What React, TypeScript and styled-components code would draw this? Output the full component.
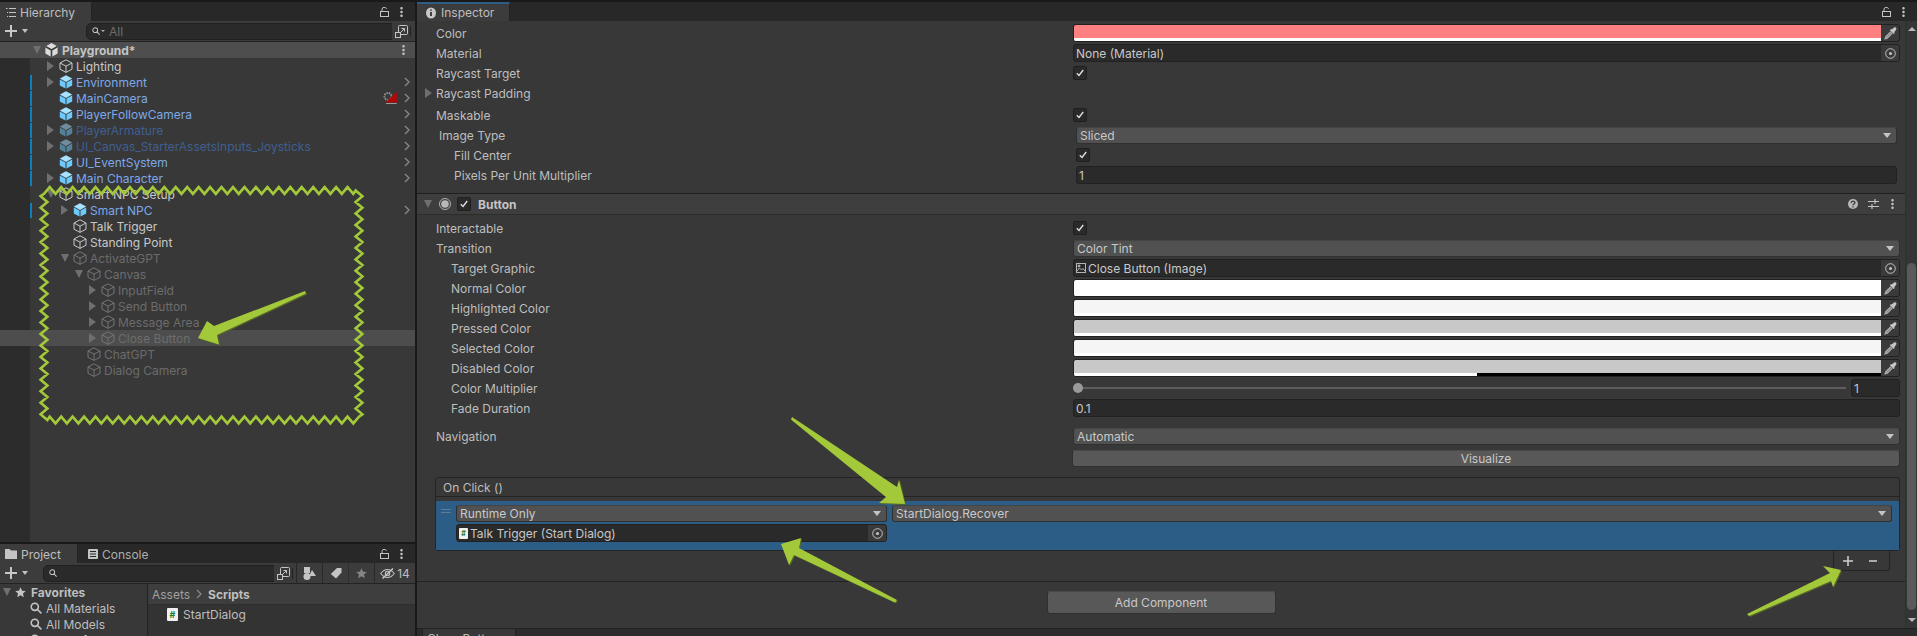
import React from "react";
import styled, { createGlobalStyle } from "styled-components";

const Global = createGlobalStyle`
  html, body { margin: 0; padding: 0; background: #191919; overflow: hidden; }
  * { box-sizing: border-box; }
`;

const Root = styled.div`
  position: relative;
  display: flex;
  width: 1917px;
  height: 636px;
  padding-top: 2px;
  overflow: hidden;
  background: #191919;
  font-family: Inter, "Liberation Sans", sans-serif;
  font-size: 12px;
  color: #bebebe;
  white-space: nowrap;
`;

/* ---------- shared icons ---------- */
const Plus = () => (
  <svg width="12" height="12" viewBox="0 0 12 12"><path d="M6 0v12M0 6h12" stroke="#c8c8c8" strokeWidth="2" /></svg>
);
const SmallCaret = styled.span`
  width: 0; height: 0; margin-left: 5px;
  border-left: 3.5px solid transparent;
  border-right: 3.5px solid transparent;
  border-top: 4px solid #c0c0c0;
`;
const TinyCaret = styled.span`
  width: 0; height: 0; margin-left: -3px;
  border-left: 2px solid transparent;
  border-right: 2px solid transparent;
  border-top: 2px solid #b0b0b0;
`;
const Lock = () => (
  <svg width="9" height="10" viewBox="0 0 9 10" fill="none" stroke="#c4c4c4"><rect x="0.5" y="4.5" width="8" height="5" /><path d="M2 4V2.5a2.3 2.3 0 0 1 4.5-.6" /></svg>
);
const Kebab = () => (
  <svg width="3" height="10" viewBox="0 0 3 10" fill="#c4c4c4"><rect width="2.4" height="2.4" x="0.3" rx="1" /><rect width="2.4" height="2.4" x="0.3" y="3.8" rx="1" /><rect width="2.4" height="2.4" x="0.3" y="7.6" rx="1" /></svg>
);
const SearchIcon = ({ size = 8 }: { size?: number }) => (
  <svg width={size} height={size} viewBox="0 0 10 10" fill="none" stroke="#c4c4c4" strokeWidth="1.3"><circle cx="4" cy="4" r="3" /><path d="M6.2 6.2 9.5 9.5" /></svg>
);
const ExpandIcon = () => (
  <svg width="13" height="13" viewBox="0 0 13 13" fill="none" stroke="#c4c4c4"><rect x="3.5" y="0.5" width="9" height="9" rx="1" /><rect x="0.5" y="7.5" width="5" height="5" fill="#3c3c3c" /><path d="M5 8 9.5 3.5M6.5 3.5h3v3" /></svg>
);
const Chevron = () => (
  <svg width="6" height="10" viewBox="0 0 6 10" fill="none" stroke="#8c8c8c" strokeWidth="1.2"><path d="M1 1l4 4-4 4" /></svg>
);
const Cube = ({ filled, dim }: { filled?: boolean; dim?: boolean }) =>
  filled ? (
    <svg width="14" height="14" viewBox="0 0 14 14" opacity={dim ? 0.5 : 1}>
      <path d="M7 .3 13.2 3.6 7 6.9.8 3.6z" fill="#a6e2ff" />
      <path d="M.8 4.6 6.5 7.6v6L.8 10.6z" fill="#6dcbfb" />
      <path d="M13.2 4.6 7.5 7.6v6l5.7-3z" fill="#6dcbfb" />
    </svg>
  ) : (
    <svg width="14" height="14" viewBox="0 0 14 14" fill="none" stroke={dim ? "#757575" : "#c8c8c8"} strokeWidth="1">
      <path d="M7 .8 13 4v6.2L7 13.4 1 10.2V4z" />
      <path d="M1 4l6 3.1L13 4M7 7.1v6.3" />
    </svg>
  );
const UnityLogo = () => (
  <svg width="13" height="14" viewBox="0 0 13 14">
    <path d="M6.5 0 12.6 3.5v7L6.5 14 .4 10.5v-7z" fill="#dcdcdc" />
    <path d="M6.5 7V14M6.5 7 .4 3.5M6.5 7l6.1-3.5" stroke="#3e3e3e" strokeWidth="1.6" />
  </svg>
);
const CameraBadge = () => (
  <svg width="15" height="14" viewBox="0 0 15 14">
    <circle cx="5" cy="5.500" r="3.500" fill="none" stroke="#8a8a8a" strokeWidth="2" strokeDasharray="1.6 .8" />
    <path d="M13.800 .5V11.500H2.500z" fill="#b00808" />
    <path d="M3 12.500h10.800" stroke="#9a9a9a" strokeWidth="1" />
  </svg>
);
const ListIcon = () => (
  <svg width="10" height="9" viewBox="0 0 10 9" fill="none" stroke="#c4c4c4"><path d="M3 .5h7M3 4.5h7M3 8.5h7M0 .5h1.5M1 4.5h1M1 8.5h1" /></svg>
);
const FolderIcon = () => (
  <svg width="12" height="10" viewBox="0 0 12 10" fill="#c4c4c4"><path d="M0 0h4.5l1.5 1.5h6V10H0z" /></svg>
);
const ConsoleIcon = () => (
  <svg width="10" height="10" viewBox="0 0 10 10"><rect width="10" height="10" rx="1" fill="#c4c4c4" /><path d="M2 2.500h6M2 5h6M2 7.500h6" stroke="#282828" /></svg>
);
const InfoIcon = () => (
  <svg width="10" height="12" viewBox="0 0 10 12"><ellipse cx="5" cy="6" rx="5" ry="5.6" fill="#c8c8c8" /><path d="M5 5v4M5 2.4v1.4" stroke="#303030" strokeWidth="1.8" /></svg>
);
const StarIcon = ({ fill = "#c4c4c4", size = 11 }: { fill?: string; size?: number }) => (
  <svg width={size} height={size} viewBox="0 0 12 12" fill={fill}><path d="M6 .3 7.7 4l4 .4-3 2.7.9 4L6 9l-3.6 2.1.9-4-3-2.7 4-.4z" /></svg>
);
const ShapesIcon = () => (
  <svg width="13" height="13" viewBox="0 0 13 13" fill="#c4c4c4"><rect x="1" width="6" height="6" /><circle cx="4" cy="9.5" r="3.5" /><path d="M9 3l4 6H6z" /></svg>
);
const TagIcon = () => (
  <svg width="12" height="12" viewBox="0 0 12 12" fill="#c4c4c4"><path d="M7 1h4.5v4.5L6 11.5 0.8 7z" /></svg>
);
const EyeOffIcon = () => (
  <svg width="15" height="11" viewBox="0 0 15 11" fill="none" stroke="#c4c4c4" strokeWidth="1.1"><path d="M.8 5.5C3 2.5 5 1.5 7.5 1.5s4.5 1 6.7 4c-2.2 3-4.2 4-6.7 4S3 8.5.8 5.5z" /><circle cx="7.5" cy="5.5" r="2.2" /><path d="M13 .5 2.5 10.5" strokeWidth="1.5" /></svg>
);
const Dropper = () => (
  <svg width="13" height="13" viewBox="0 0 13 13" fill="none">
    <path d="M7.6 2.600 9.800.8c.7-.6 1.500-.6 2.100 0 .7.600.7 1.400.1 2.100L10.200 5.200l.6.700-1.100 1.100L5.900 3.200 7 2.100z" fill="#c6c6c6" />
    <path d="M7 4.800 2 9.800 1.400 11.600 3.200 11 8.200 6" stroke="#a8a8a8" strokeWidth="1.600" />
  </svg>
);
const Target = () => (
  <svg width="11" height="11" viewBox="0 0 11 11" fill="none" stroke="#c4c4c4"><circle cx="5.5" cy="5.5" r="4.8" /><circle cx="5.5" cy="5.5" r="1.5" fill="#c4c4c4" stroke="none" /></svg>
);
const Check = () => (
  <svg width="8" height="8" viewBox="0 0 8 8" fill="none" stroke="#e4e4e4" strokeWidth="1.3"><path d="M.8 4.3 3 6.5 7.2 1" /></svg>
);
const ComponentGlyph = () => (
  <svg width="12" height="12" viewBox="0 0 12 12"><circle cx="6" cy="6" r="5.5" fill="none" stroke="#b0b0b0" /><circle cx="6" cy="6" r="3.8" fill="#b8b8b8" /></svg>
);
const HelpIcon = () => (
  <svg width="10" height="10" viewBox="0 0 10 10"><circle cx="5" cy="5" r="5" fill="#b8b8b8" /><path d="M3.2 3.9c0-2.300 3.700-2.300 3.700-.2 0 1.300-1.900 1.200-1.900 2.500M5 7.200v1.300" fill="none" stroke="#3a3a3a" strokeWidth="1.3" /></svg>
);
const SlidersIcon = () => (
  <svg width="11" height="10" viewBox="0 0 11 10" fill="none" stroke="#c4c4c4" strokeWidth="1.2"><path d="M0 2.500h11M7 0v5M0 7.500h11M4 5v5" /></svg>
);
const ImageGlyph = () => (
  <svg width="10" height="10" viewBox="0 0 10 10" fill="none" stroke="#b4b4b4"><rect x=".5" y=".5" width="9" height="9" /><path d="M1 8l2.500-3 2 2 1.500-1.500L9 8" /><circle cx="3" cy="3" r="1" fill="#b4b4b4" /></svg>
);

const Fold = styled.span<{ $dir?: "right" | "down" | "none" }>`
  display: inline-block;
  flex: none;
  width: 12px;
  height: 10px;
  position: relative;
  &::before {
    content: "";
    position: absolute;
    left: 0;
    top: 0;
    ${(p) =>
      p.$dir === "right"
        ? "border-left: 7px solid #6f6f6f; border-top: 5px solid transparent; border-bottom: 5px solid transparent;"
        : p.$dir === "down"
        ? "top: 1px; border-top: 8px solid #6f6f6f; border-left: 4.5px solid transparent; border-right: 4.5px solid transparent;"
        : ""}
  }
`;

/* ---------- panel chrome ---------- */
const TabBar = styled.div`
  display: flex;
  align-items: stretch;
  flex: none;
  height: 19px;
  background: #282828;
`;
const Tab = styled.div<{ $w: number; $pad?: number; $active?: boolean; $accent?: boolean }>`
  display: flex;
  align-items: center;
  gap: ${(p) => (p.$accent ? 5 : 4)}px;
  width: ${(p) => p.$w}px;
  padding-left: ${(p) => p.$pad ?? 6}px;
  color: ${(p) => (p.$active ? "#bebebe" : "#aeaeae")};
  background: ${(p) => (p.$active ? "#3c3c3c" : "transparent")};
  border-top: ${(p) => (p.$accent ? "2px solid #2c5d87" : "1px solid transparent")};
  border-right: ${(p) => (p.$active ? "1px solid #232323" : "none")};
`;
const TabTools = styled.div`
  display: flex;
  align-items: center;
  gap: 11px;
  margin-left: auto;
  padding-right: 12px;
`;
const Toolbar = styled.div`
  display: flex;
  align-items: center;
  flex: none;
  height: 21px;
  padding-left: 5px;
  background: #3c3c3c;
  border-bottom: 1px solid #232323;
`;
const SearchField = styled.div<{ $left: number; $w: number }>`
  display: flex;
  align-items: center;
  gap: 4px;
  width: ${(p) => p.$w}px;
  height: 17px;
  margin-left: ${(p) => p.$left}px;
  padding-left: 5px;
  background: #2a2a2a;
  border: 1px solid #202020;
  border-radius: 5px;
  color: #6e6e6e;
`;
const SearchExpand = styled.div`
  display: flex;
  align-items: center;
  justify-content: center;
  width: 18px;
  height: 17px;
  margin-left: auto;
  background: #3a3a3a;
`;

/* ---------- layout ---------- */
const LeftColumn = styled.div`
  display: flex;
  flex-direction: column;
  flex: none;
  width: 415px;
  height: 634px;
`;
const Hierarchy = styled.section`
  display: flex;
  flex-direction: column;
  flex: none;
  height: 540px;
`;
const SceneHeader = styled.div`
  display: flex;
  align-items: center;
  flex: none;
  height: 16px;
  padding: 0 10px 0 33px;
  background: #4e4e4e;
  font-weight: 700;
  color: #c4c4c4;
`;
const SceneName = styled.span`
  margin-left: 1px;
  padding-left: 3px;
`;
const Spacer = styled.span`
  margin-left: auto;
`;
const Tree = styled.div`
  flex: 1;
  background: linear-gradient(to right, #2c2c2c 30px, #383838 30px);
`;
const TreeRow = styled.div<{ $selected?: boolean }>`
  display: flex;
  align-items: center;
  height: 16px;
  padding: 0 5px 0 30px;
  background: ${(p) => (p.$selected ? "#4d4d4d" : "transparent")};
`;
const OverrideMark = styled.span<{ $on?: boolean }>`
  flex: none;
  width: 2px;
  height: 15px;
  background: ${(p) => (p.$on ? "#0f80be" : "transparent")};
`;
const TreeIndent = styled.span<{ $depth: number }>`
  flex: none;
  width: ${(p) => 15 + p.$depth * 14}px;
`;
const toneColor = { normal: "#c8c8c8", prefab: "#7ca8e8", prefabDim: "#3f5f92", inactive: "#6c6c6c" };
const TreeLabel = styled.span<{ $tone: keyof typeof toneColor }>`
  margin-left: 3px;
  color: ${(p) => toneColor[p.$tone]};
`;
const RowEnd = styled.span`
  display: flex;
  align-items: center;
  gap: 6px;
  margin-left: auto;
`;

const Project = styled.section`
  display: flex;
  flex-direction: column;
  flex: 1;
  min-height: 0;
  margin-top: 2px;
  overflow: hidden;
`;
const ToolGroup = styled.div`
  display: flex;
  align-items: stretch;
  height: 20px;
  margin-left: 3px;
`;
const ToolButton = styled.div<{ $w: number; $dim?: boolean }>`
  display: flex;
  align-items: center;
  justify-content: center;
  gap: 2px;
  width: ${(p) => p.$w}px;
  border-left: 1px solid #282828;
  opacity: ${(p) => (p.$dim ? 0.55 : 1)};
`;
const ProjectBody = styled.div`
  display: flex;
  flex: 1;
  min-height: 0;
`;
const Favorites = styled.div`
  flex: none;
  width: 148px;
  background: #383838;
  border-right: 1px solid #232323;
`;
const FavoriteHead = styled.div`
  display: flex;
  align-items: center;
  height: 16px;
  padding-left: 3px;
  font-weight: 700;
  gap: 0;
`;
const FavoriteTitle = styled.span`
  margin-left: 5px;
`;
const FavoriteItem = styled.div`
  display: flex;
  align-items: center;
  gap: 4px;
  height: 16px;
  padding-left: 30px;
`;
const Browser = styled.div`
  flex: 1;
  background: #333333;
`;
const Breadcrumb = styled.div`
  display: flex;
  align-items: center;
  gap: 6px;
  height: 21px;
  padding-left: 4px;
  background: #3e3e3e;
  border-bottom: 1px solid #2e2e2e;
  color: #a0a0a0;
`;
const CrumbStrong = styled.b`
  color: #bebebe;
`;
const AssetRow = styled.div`
  display: flex;
  align-items: center;
  gap: 5px;
  height: 18px;
  padding-left: 19px;
`;
const ScriptGlyph = styled.span<{ $size: number }>`
  display: inline-flex;
  align-items: center;
  justify-content: center;
  flex: none;
  width: ${(p) => p.$size}px;
  height: ${(p) => p.$size + 2}px;
  background: #f0f0f0;
  border-radius: 1px;
  color: #1f7a33;
  font-size: ${(p) => p.$size - 2}px;
  font-weight: 700;
  line-height: 1;
`;

const VDivider = styled.div`
  flex: none;
  width: 2px;
`;

/* ---------- inspector ---------- */
const Inspector = styled.section`
  display: flex;
  flex-direction: column;
  flex: 1;
  min-width: 0;
  height: 634px;
`;
const InspectorBody = styled.div`
  display: flex;
  flex: none;
  height: 607px;
  background: #383838;
`;
const Content = styled.div`
  flex: 1;
  min-width: 0;
  padding-top: 2px;
`;
const Scrollbar = styled.div`
  display: flex;
  flex-direction: column;
  align-items: center;
  flex: none;
  width: 12px;
  background: #353535;
  border-left: 1px solid #303030;
`;
const ScrollUp = styled.span`
  margin-top: 6px;
  border-left: 4px solid transparent;
  border-right: 4px solid transparent;
  border-bottom: 4px solid #b8b8b8;
`;
const ScrollThumb = styled.span`
  width: 9px;
  height: 347px;
  margin-top: 232px;
  background: #5a5a5a;
  border-radius: 5px;
`;
const ScrollDown = styled.span`
  margin-top: 8px;
  border-left: 4px solid transparent;
  border-right: 4px solid transparent;
  border-top: 4px solid #b8b8b8;
`;
const PropRow = styled.div<{ $top?: number }>`
  display: grid;
  grid-template-columns: 656px 1fr;
  align-items: center;
  height: 20px;
  margin-top: ${(p) => p.$top ?? 0}px;
  padding-right: 5px;
`;
const PropLabel = styled.div<{ $indent?: number }>`
  display: flex;
  align-items: center;
  padding-left: ${(p) => 19 + (p.$indent ?? 0)}px;
`;
const LabelFold = styled(Fold)`
  width: 11px;
  margin-left: -11px;
`;
const Value = styled.div<{ $inset?: number }>`
  display: flex;
  align-items: center;
  min-width: 0;
  padding: 0 ${(p) => p.$inset ?? 0}px;
`;
const Box = styled.span`
  display: flex;
  align-items: center;
  justify-content: center;
  flex: none;
  width: 14px;
  height: 14px;
  background: #2a2a2a;
  border: 1px solid #1f1f1f;
  border-radius: 2px;
`;
const Dropdown = styled.div<{ $w?: number }>`
  display: flex;
  align-items: center;
  justify-content: space-between;
  width: ${(p) => (p.$w ? `${p.$w}px` : "100%")};
  flex: ${(p) => (p.$w ? "none" : "1")};
  height: 17px;
  padding: 0 5px 0 3px;
  background: #515151;
  border: 1px solid #303030;
  border-top-color: #444;
  border-radius: 3px;
  color: #c8c8c8;
`;
const Field = styled.div<{ $w?: number }>`
  display: flex;
  align-items: center;
  width: ${(p) => (p.$w ? `${p.$w}px` : "100%")};
  flex: ${(p) => (p.$w ? "none" : "1")};
  height: 18px;
  padding-left: 2px;
  gap: 2px;
  overflow: hidden;
  background: #2a2a2a;
  border: 1px solid #212121;
  border-radius: 3px;
  color: #c8c8c8;
`;
const FieldAction = styled.span`
  display: flex;
  align-items: center;
  justify-content: center;
  flex: none;
  width: 18px;
  height: 16px;
  margin-left: auto;
  background: #3a3a3a;
`;
const SwatchField = styled.div`
  display: flex;
  width: 100%;
  height: 18px;
  overflow: hidden;
  background: #1f1f1f;
  border: 1px solid #212121;
  border-radius: 3px;
`;
const Swatch = styled.div<{ $color: string; $alpha: number }>`
  display: flex;
  flex-direction: column;
  flex: 1;
  background: ${(p) => p.$color};
  &::after {
    content: "";
    margin-top: auto;
    height: 3px;
    background: linear-gradient(to right, #fff ${(p) => p.$alpha}%, #000 ${(p) => p.$alpha}%);
  }
`;
const DropperCell = styled.span`
  display: flex;
  align-items: center;
  justify-content: center;
  flex: none;
  width: 18px;
  padding-left: 1px;
  background: #3a3a3a;
`;
const SliderTrack = styled.div`
  position: relative;
  flex: 1;
  height: 2px;
  background: #5e5e5e;
`;
const SliderKnob = styled.span`
  position: absolute;
  left: 0;
  top: -4px;
  width: 10px;
  height: 10px;
  background: #9a9a9a;
  border-radius: 50%;
`;
const SliderBox = styled(Field)`
  margin-left: 5px;
`;
const WideButton = styled.div`
  display: flex;
  align-items: center;
  justify-content: center;
  width: calc(100% + 1px);
  height: 17px;
  margin-left: -1px;
  background: #585858;
  border: 1px solid #303030;
  border-top-color: #4a4a4a;
  border-radius: 3px;
  color: #c8c8c8;
`;
const ComponentHeader = styled.div`
  display: flex;
  align-items: center;
  height: 22px;
  margin-top: 8px;
  margin-bottom: 3px;
  padding: 0 12px 0 7px;
  background: #3e3e3e;
  border-top: 1px solid #1f1f1f;
  border-bottom: 1px solid #2c2c2c;
`;
const HeaderFold = styled(Fold)`
  width: 15px;
`;
const HeaderCheck = styled(Box)`
  margin: 0 7px 0 6px;
`;
const HeaderTitle = styled.b`
  color: #c4c4c4;
`;
const HeaderTools = styled.span`
  display: flex;
  align-items: center;
  gap: 10px;
  margin-left: auto;
`;
const HeaderToolKebab = styled.span`
  display: flex;
  margin-left: 2px;
  margin-right: -1px;
`;
const EventBox = styled.div`
  margin: 9px 5px 0 18px;
`;
const EventFrame = styled.div`
  background: #383838;
  border: 1px solid #242424;
  border-radius: 3px;
`;
const EventHeader = styled.div`
  display: flex;
  align-items: center;
  height: 19px;
  padding-left: 7px;
  border-bottom: 1px solid #242424;
`;
const EventRow = styled.div`
  position: relative;
  margin-top: 4px;
  padding: 4px 7px 8px 20px;
  background: #2c5d87;
`;
const DragHandle = styled.span`
  position: absolute;
  left: 5px;
  top: 8px;
  width: 10px;
  height: 4px;
  border-top: 1px solid #5e7c96;
  border-bottom: 1px solid #5e7c96;
`;
const EventLine = styled.div<{ $top?: number }>`
  display: flex;
  gap: 5px;
  margin-top: ${(p) => p.$top ?? 0}px;
`;
const EventFooter = styled.div`
  display: flex;
  align-items: center;
  gap: 16px;
  width: 57px;
  height: 20px;
  margin: 0 10px 0 auto;
  padding: 0 0 0 9px;
  border: 1px solid #242424;
  border-top: none;
  border-radius: 0 0 3px 3px;
`;
const Separator = styled.div`
  height: 1px;
  margin-top: 10px;
  background: #232323;
`;
const AddButton = styled.div`
  display: flex;
  align-items: center;
  justify-content: center;
  width: 229px;
  height: 23px;
  margin: 9px auto 0;
  background: #585858;
  border: 1px solid #303030;
  border-top-color: #4a4a4a;
  border-radius: 3px;
  color: #c8c8c8;
`;
const BottomStrip = styled.div`
  display: flex;
  flex: 1;
  min-height: 0;
  padding-left: 5px;
  overflow: hidden;
  background: #2c2c2c;
  border-top: 1px solid #232323;
`;
const BottomTab = styled.div`
  width: 94px;
  height: 20px;
  padding: 2px 0 0 4px;
  background: #383838;
  border-left: 1px solid #232323;
  border-right: 1px solid #232323;
`;
const Caret = styled.span`
  flex: none;
  border-left: 4px solid transparent;
  border-right: 4px solid transparent;
  border-top: 5px solid #c4c4c4;
`;

/* ---------- annotation overlay ---------- */
const Overlay = styled.svg`
  position: absolute;
  left: 0;
  top: 0;
  pointer-events: none;
`;
const ArrowShape = styled.polygon`
  fill: #a3c93a;
  filter: drop-shadow(1px 1px 0 #55662a);
`;

function zigzag(corners: [number, number][], period: number, amp: number): string {
  const pts: string[] = [];
  corners.forEach(([ax, ay], i) => {
    const [bx, by] = corners[(i + 1) % corners.length];
    const len = Math.hypot(bx - ax, by - ay);
    const n = Math.round(len / (period / 2));
    const nx = -(by - ay) / len;
    const ny = (bx - ax) / len;
    for (let k = 0; k < n; k++) {
      const t = k / n;
      const s = k % 2 === 0 ? amp : -amp;
      pts.push(`${(ax + (bx - ax) * t + nx * s).toFixed(1)},${(ay + (by - ay) * t + ny * s).toFixed(1)}`);
    }
  });
  return pts.join(" ");
}

const Annotations = () => (
  <Overlay width="1917" height="636" viewBox="0 0 1917 636">
    <polygon
      points={zigzag([[44, 190.5], [359, 190.5], [359, 420], [44, 420]], 11.5, 3.4)}
      fill="none"
      stroke="#a3c93a"
      strokeWidth="2.6"
    />
    <ArrowShape points="305,291 306,293.5 217,335 219,344.5 198,338 207,321 214,326" />
    <ArrowShape points="792,417 897,487 899,480 905,504 879,503 886,497 791,419.5" />
    <ArrowShape points="897,600 895,602.5 794,555 789,565 781,544 801,538 799,548" />
    <ArrowShape points="1747,614 1830,573 1823,566 1841,570 1833,587 1831,581 1749,616" />
  </Overlay>
);

/* ---------- data ---------- */
type TreeItem = {
  label: string;
  depth: number;
  fold?: "right" | "down" | "none";
  kind: "plain" | "prefab" | "prefabDim" | "inactive";
  override?: boolean;
  selected?: boolean;
  badge?: boolean;
};
const treeItems: TreeItem[] = [
  { label: "Lighting", depth: 0, fold: "right", kind: "plain" },
  { label: "Environment", depth: 0, fold: "right", kind: "prefab", override: true },
  { label: "MainCamera", depth: 0, kind: "prefab", override: true, badge: true },
  { label: "PlayerFollowCamera", depth: 0, kind: "prefab", override: true },
  { label: "PlayerArmature", depth: 0, fold: "right", kind: "prefabDim", override: true },
  { label: "UI_Canvas_StarterAssetsInputs_Joysticks", depth: 0, fold: "right", kind: "prefabDim", override: true },
  { label: "UI_EventSystem", depth: 0, kind: "prefab", override: true },
  { label: "Main Character", depth: 0, fold: "right", kind: "prefab", override: true },
  { label: "Smart NPC Setup", depth: 0, fold: "down", kind: "plain" },
  { label: "Smart NPC", depth: 1, fold: "right", kind: "prefab", override: true },
  { label: "Talk Trigger", depth: 1, kind: "plain" },
  { label: "Standing Point", depth: 1, kind: "plain" },
  { label: "ActivateGPT", depth: 1, fold: "down", kind: "inactive" },
  { label: "Canvas", depth: 2, fold: "down", kind: "inactive" },
  { label: "InputField", depth: 3, fold: "right", kind: "inactive" },
  { label: "Send Button", depth: 3, fold: "right", kind: "inactive" },
  { label: "Message Area", depth: 3, fold: "right", kind: "inactive" },
  { label: "Close Button", depth: 3, fold: "right", kind: "inactive", selected: true },
  { label: "ChatGPT", depth: 2, kind: "inactive" },
  { label: "Dialog Camera", depth: 2, kind: "inactive" },
];
const tones = { plain: "normal", prefab: "prefab", prefabDim: "prefabDim", inactive: "inactive" } as const;

const colorRows = [
  { label: "Normal Color", color: "#ffffff", alpha: 100 },
  { label: "Highlighted Color", color: "#f5f5f5", alpha: 100 },
  { label: "Pressed Color", color: "#c8c8c8", alpha: 100 },
  { label: "Selected Color", color: "#f5f5f5", alpha: 100 },
  { label: "Disabled Color", color: "#c8c8c8", alpha: 50 },
];

const TreeEntry = ({ item }: { item: TreeItem }) => (
  <TreeRow $selected={item.selected}>
    <OverrideMark $on={item.override} />
    <TreeIndent $depth={item.depth} />
    <Fold $dir={item.fold ?? "none"} />
    <Cube filled={item.kind === "prefab" || item.kind === "prefabDim"} dim={item.kind === "prefabDim" || item.kind === "inactive"} />
    <TreeLabel $tone={tones[item.kind]}>{item.label}</TreeLabel>
    {(item.override || item.badge) && (
      <RowEnd>
        {item.badge && <CameraBadge />}
        <Chevron />
      </RowEnd>
    )}
  </TreeRow>
);

const ObjectField = ({ children, w }: { children: React.ReactNode; w?: number }) => (
  <Field $w={w}>
    {children}
    <FieldAction>
      <Target />
    </FieldAction>
  </Field>
);

export default function App() {
  return (
    <Root>
      <Global />
      <LeftColumn>
        <Hierarchy>
          <TabBar>
            <Tab $w={92} $active>
              <ListIcon />
              <span>Hierarchy</span>
            </Tab>
            <TabTools>
              <Lock />
              <Kebab />
            </TabTools>
          </TabBar>
          <Toolbar>
            <Plus />
            <SmallCaret />
            <SearchField $left={58} $w={325}>
              <SearchIcon />
              <TinyCaret />
              <span>All</span>
              <SearchExpand>
                <ExpandIcon />
              </SearchExpand>
            </SearchField>
          </Toolbar>
          <SceneHeader>
            <Fold $dir="down" />
            <UnityLogo />
            <SceneName>Playground*</SceneName>
            <Spacer />
            <Kebab />
          </SceneHeader>
          <Tree>
            {treeItems.map((item) => (
              <TreeEntry key={item.label} item={item} />
            ))}
          </Tree>
        </Hierarchy>
        <Project>
          <TabBar>
            <Tab $w={78} $active $pad={5}>
              <FolderIcon />
              <span>Project</span>
            </Tab>
            <Tab $w={82} $pad={10}>
              <ConsoleIcon />
              <span>Console</span>
            </Tab>
            <TabTools>
              <Lock />
              <Kebab />
            </TabTools>
          </TabBar>
          <Toolbar>
            <Plus />
            <SmallCaret />
            <SearchField $left={15} $w={251}>
              <SearchIcon />
              <SearchExpand>
                <ExpandIcon />
              </SearchExpand>
            </SearchField>
            <ToolGroup>
              <ToolButton $w={26}>
                <ShapesIcon />
              </ToolButton>
              <ToolButton $w={26}>
                <TagIcon />
              </ToolButton>
              <ToolButton $w={26} $dim>
                <StarIcon />
              </ToolButton>
              <ToolButton $w={41}>
                <EyeOffIcon />
                <span>14</span>
              </ToolButton>
            </ToolGroup>
          </Toolbar>
          <ProjectBody>
            <Favorites>
              <FavoriteHead>
                <Fold $dir="down" />
                <StarIcon />
                <FavoriteTitle>Favorites</FavoriteTitle>
              </FavoriteHead>
              <FavoriteItem>
                <SearchIcon size={12} />
                <span>All Materials</span>
              </FavoriteItem>
              <FavoriteItem>
                <SearchIcon size={12} />
                <span>All Models</span>
              </FavoriteItem>
              <FavoriteItem>
                <SearchIcon size={12} />
                <span>All Prefabs</span>
              </FavoriteItem>
            </Favorites>
            <Browser>
              <Breadcrumb>
                <span>Assets</span>
                <Chevron />
                <CrumbStrong>Scripts</CrumbStrong>
              </Breadcrumb>
              <AssetRow>
                <ScriptGlyph $size={11}>#</ScriptGlyph>
                <span>StartDialog</span>
              </AssetRow>
            </Browser>
          </ProjectBody>
        </Project>
      </LeftColumn>
      <VDivider />
      <Inspector>
        <TabBar>
          <Tab $w={93} $active $accent $pad={9}>
            <InfoIcon />
            <span>Inspector</span>
          </Tab>
          <TabTools>
            <Lock />
            <Kebab />
          </TabTools>
        </TabBar>
        <InspectorBody>
          <Content>
            <PropRow>
              <PropLabel>Color</PropLabel>
              <Value>
                <SwatchField>
                  <Swatch $color="#ff8080" $alpha={100} />
                  <DropperCell>
                    <Dropper />
                  </DropperCell>
                </SwatchField>
              </Value>
            </PropRow>
            <PropRow>
              <PropLabel>Material</PropLabel>
              <Value>
                <ObjectField>None (Material)</ObjectField>
              </Value>
            </PropRow>
            <PropRow>
              <PropLabel>Raycast Target</PropLabel>
              <Value>
                <Box>
                  <Check />
                </Box>
              </Value>
            </PropRow>
            <PropRow>
              <PropLabel>
                <LabelFold $dir="right" />
                Raycast Padding
              </PropLabel>
            </PropRow>
            <PropRow $top={2}>
              <PropLabel>Maskable</PropLabel>
              <Value>
                <Box>
                  <Check />
                </Box>
              </Value>
            </PropRow>
            <PropRow>
              <PropLabel $indent={3}>Image Type</PropLabel>
              <Value $inset={3}>
                <Dropdown>
                  <span>Sliced</span>
                  <Caret />
                </Dropdown>
              </Value>
            </PropRow>
            <PropRow>
              <PropLabel $indent={18}>Fill Center</PropLabel>
              <Value $inset={3}>
                <Box>
                  <Check />
                </Box>
              </Value>
            </PropRow>
            <PropRow>
              <PropLabel $indent={18}>Pixels Per Unit Multiplier</PropLabel>
              <Value $inset={3}>
                <Field>1</Field>
              </Value>
            </PropRow>

            <ComponentHeader>
              <HeaderFold $dir="down" />
              <ComponentGlyph />
              <HeaderCheck>
                <Check />
              </HeaderCheck>
              <HeaderTitle>Button</HeaderTitle>
              <HeaderTools>
                <HelpIcon />
                <SlidersIcon />
                <HeaderToolKebab>
                  <Kebab />
                </HeaderToolKebab>
              </HeaderTools>
            </ComponentHeader>

            <PropRow>
              <PropLabel>Interactable</PropLabel>
              <Value>
                <Box>
                  <Check />
                </Box>
              </Value>
            </PropRow>
            <PropRow>
              <PropLabel>Transition</PropLabel>
              <Value>
                <Dropdown>
                  <span>Color Tint</span>
                  <Caret />
                </Dropdown>
              </Value>
            </PropRow>
            <PropRow>
              <PropLabel $indent={15}>Target Graphic</PropLabel>
              <Value>
                <ObjectField>
                  <ImageGlyph />
                  Close Button (Image)
                </ObjectField>
              </Value>
            </PropRow>
            {colorRows.map((row) => (
              <PropRow key={row.label}>
                <PropLabel $indent={15}>{row.label}</PropLabel>
                <Value>
                  <SwatchField>
                    <Swatch $color={row.color} $alpha={row.alpha} />
                    <DropperCell>
                      <Dropper />
                    </DropperCell>
                  </SwatchField>
                </Value>
              </PropRow>
            ))}
            <PropRow>
              <PropLabel $indent={15}>Color Multiplier</PropLabel>
              <Value>
                <SliderTrack>
                  <SliderKnob />
                </SliderTrack>
                <SliderBox $w={49}>1</SliderBox>
              </Value>
            </PropRow>
            <PropRow>
              <PropLabel $indent={15}>Fade Duration</PropLabel>
              <Value>
                <Field>0.1</Field>
              </Value>
            </PropRow>
            <PropRow $top={8}>
              <PropLabel>Navigation</PropLabel>
              <Value>
                <Dropdown>
                  <span>Automatic</span>
                  <Caret />
                </Dropdown>
              </Value>
            </PropRow>
            <PropRow $top={2}>
              <span />
              <Value>
                <WideButton>Visualize</WideButton>
              </Value>
            </PropRow>

            <EventBox>
              <EventFrame>
                <EventHeader>On Click ()</EventHeader>
                <EventRow>
                  <DragHandle />
                  <EventLine>
                    <Dropdown $w={431}>
                      <span>Runtime Only</span>
                      <Caret />
                    </Dropdown>
                    <Dropdown>
                      <span>StartDialog.Recover</span>
                      <Caret />
                    </Dropdown>
                  </EventLine>
                  <EventLine $top={2}>
                    <ObjectField w={431}>
                      <ScriptGlyph $size={9}>#</ScriptGlyph>
                      Talk Trigger (Start Dialog)
                    </ObjectField>
                  </EventLine>
                </EventRow>
              </EventFrame>
              <EventFooter>
                <svg width="10" height="10" viewBox="0 0 10 10"><path d="M5 0v10M0 5h10" stroke="#d0d0d0" strokeWidth="1.5" /></svg>
                <svg width="8" height="2" viewBox="0 0 8 2"><path d="M0 1h8" stroke="#d0d0d0" strokeWidth="1.5" /></svg>
              </EventFooter>
            </EventBox>
            <Separator />
            <AddButton>Add Component</AddButton>
          </Content>
          <Scrollbar>
            <ScrollUp />
            <ScrollThumb />
            <ScrollDown />
          </Scrollbar>
        </InspectorBody>
        <BottomStrip>
          <BottomTab>Close Button</BottomTab>
        </BottomStrip>
      </Inspector>
      <Annotations />
    </Root>
  );
}
